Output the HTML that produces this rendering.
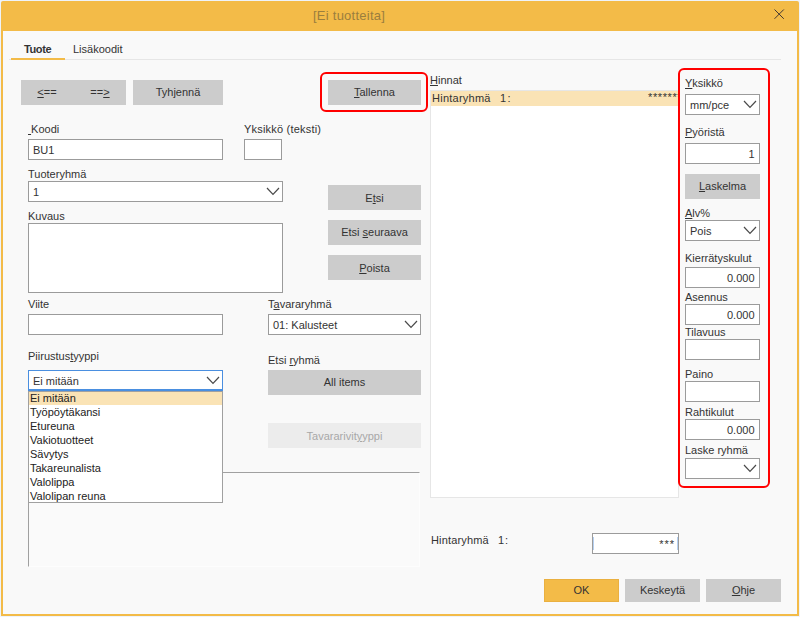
<!DOCTYPE html><html><head><meta charset="utf-8"><style>
html,body{margin:0;padding:0;}
body{width:800px;height:617px;position:relative;overflow:hidden;background:#eef3fa;font-family:'Liberation Sans',sans-serif;}
.t{position:absolute;white-space:pre;line-height:13px;font-family:'Liberation Sans',sans-serif;}
.r{position:absolute;}
u{text-decoration:underline;text-underline-offset:1px;}
</style></head><body>
<div class="r" style="left:1px;top:1px;width:798px;height:615px;background:#f3bb48;border-radius:2px 2px 0 0;"></div>
<div class="r" style="left:3px;top:31px;width:794px;height:583px;background:#f9f9f9;"></div>
<div class="t" style="left:313px;top:9px;font-size:13px;color:#9a7e3e;font-weight:normal;letter-spacing:0.25px;">[Ei tuotteita]</div>
<svg class="r" style="left:773px;top:8px" width="13" height="13"><path d="M1.5 1.5 L10.8 10.8 M10.8 1.5 L1.5 10.8" stroke="#3a3030" stroke-width="0.95" fill="none"/></svg>
<div class="r" style="left:9px;top:59px;width:772px;height:1px;background:#e6e6e6;"></div>
<div class="r" style="left:11px;top:58px;width:54px;height:2px;background:#f3bb48;"></div>
<div class="t" style="left:24px;top:43px;font-size:11px;color:#333333;font-weight:bold;letter-spacing:-0.4px;">Tuote</div>
<div class="t" style="left:73px;top:43px;font-size:11px;color:#333333;font-weight:normal;">Lisäkoodit</div>
<div class="r" style="left:21px;top:80px;width:105px;height:25px;background:#cccccc;"></div>
<div class="t" style="left:-53px;width:200px;text-align:center;top:86px;font-size:11px;color:#333333"><u>&lt;</u>==</div>
<div class="t" style="left:0px;width:200px;text-align:center;top:86px;font-size:11px;color:#333333">==<u>&gt;</u></div>
<div class="r" style="left:133px;top:80px;width:90px;height:25px;background:#cccccc;box-sizing:border-box;"></div>
<div class="t" style="left:78.0px;width:200px;text-align:center;top:86px;font-size:11px;color:#333333">Tyhjennä</div>
<div class="r" style="left:328px;top:80px;width:93px;height:25px;background:#cccccc;box-sizing:border-box;"></div>
<div class="t" style="left:274.5px;width:200px;text-align:center;top:86px;font-size:11px;color:#333333"><u>T</u>allenna</div>
<div class="t" style="left:28px;top:123px;font-size:11px;color:#333333;font-weight:normal;"><u> </u>Koodi</div>
<div class="r" style="left:28px;top:139px;width:195px;height:21px;background:#ffffff;border:1px solid #9b9b9b;box-sizing:border-box;"></div>
<div class="t" style="left:33px;top:144px;font-size:11px;color:#333333;font-weight:normal;">BU1</div>
<div class="t" style="left:244px;top:123px;font-size:11px;color:#333333;font-weight:normal;letter-spacing:0.2px;">Yksikkö (teksti)</div>
<div class="r" style="left:244px;top:139px;width:38px;height:21px;background:#ffffff;border:1px solid #9b9b9b;box-sizing:border-box;"></div>
<div class="t" style="left:28px;top:168px;font-size:11px;color:#333333;font-weight:normal;">Tuoteryhmä</div>
<div class="r" style="left:28px;top:181px;width:255px;height:21px;background:#ffffff;border:1px solid #9b9b9b;box-sizing:border-box;"></div>
<div class="t" style="left:33px;top:186px;font-size:11px;color:#333333;font-weight:normal;">1</div>
<svg class="r" style="left:266px;top:187px" width="14" height="9"><polyline points="1,1 7.0,7.4 13,1" fill="none" stroke="#4a4a4a" stroke-width="1.2"/></svg>
<div class="t" style="left:28px;top:210px;font-size:11px;color:#333333;font-weight:normal;">Kuvaus</div>
<div class="r" style="left:28px;top:223px;width:255px;height:70px;background:#ffffff;border:1px solid #9b9b9b;box-sizing:border-box;"></div>
<div class="r" style="left:328px;top:185px;width:93px;height:25px;background:#cccccc;box-sizing:border-box;"></div>
<div class="t" style="left:274.5px;width:200px;text-align:center;top:192px;font-size:11px;color:#333333">E<u>t</u>si</div>
<div class="r" style="left:328px;top:220px;width:93px;height:25px;background:#cccccc;box-sizing:border-box;"></div>
<div class="t" style="left:274.5px;width:200px;text-align:center;top:226px;font-size:11px;color:#333333">Etsi <u>s</u>euraava</div>
<div class="r" style="left:328px;top:255px;width:93px;height:25px;background:#cccccc;box-sizing:border-box;"></div>
<div class="t" style="left:274.5px;width:200px;text-align:center;top:262px;font-size:11px;color:#333333"><u>P</u>oista</div>
<div class="t" style="left:28px;top:298px;font-size:11px;color:#333333;font-weight:normal;">Viite</div>
<div class="r" style="left:28px;top:314px;width:195px;height:21px;background:#ffffff;border:1px solid #9b9b9b;box-sizing:border-box;"></div>
<div class="t" style="left:268px;top:298px;font-size:11px;color:#333333;font-weight:normal;">T<u>a</u>vararyhmä</div>
<div class="r" style="left:268px;top:314px;width:153px;height:21px;background:#ffffff;border:1px solid #9b9b9b;box-sizing:border-box;"></div>
<div class="t" style="left:273px;top:319px;font-size:11px;color:#333333;font-weight:normal;">01: Kalusteet</div>
<svg class="r" style="left:404px;top:320px" width="14" height="9"><polyline points="1,1 7.0,7.4 13,1" fill="none" stroke="#4a4a4a" stroke-width="1.2"/></svg>
<div class="t" style="left:28px;top:350px;font-size:11px;color:#333333;font-weight:normal;">Piirustus<u>t</u>yyppi</div>
<div class="t" style="left:268px;top:354px;font-size:11px;color:#333333;font-weight:normal;">Etsi <u>r</u>yhmä</div>
<div class="r" style="left:268px;top:370px;width:153px;height:25px;background:#cccccc;box-sizing:border-box;"></div>
<div class="t" style="left:244.5px;width:200px;text-align:center;top:376px;font-size:11px;color:#333333">All items</div>
<div class="r" style="left:268px;top:423px;width:153px;height:25px;background:#ececec;"></div>
<div class="t" style="left:244.5px;width:200px;text-align:center;top:430px;font-size:11px;color:#a8a8a8">Tavararivit<u>y</u>yppi</div>
<div class="r" style="left:28px;top:472px;width:390px;height:93px;background:#fafafa;border-left:1px solid #a0a0a0;border-top:1px solid #a0a0a0;border-right:1px solid #fdfdfd;border-bottom:1px solid #fdfdfd;"></div>
<div class="r" style="left:28px;top:370px;width:195px;height:21px;background:#ffffff;border:1px solid #4a8fe0;box-sizing:border-box;"></div>
<div class="t" style="left:33px;top:375px;font-size:11px;color:#333333;font-weight:normal;">Ei mitään</div>
<svg class="r" style="left:206px;top:376px" width="14" height="9"><polyline points="1,1 7.0,7.4 13,1" fill="none" stroke="#4a4a4a" stroke-width="1.2"/></svg>
<div class="r" style="left:28px;top:389px;width:195px;height:1px;background:#4a8fe0;"></div>
<div class="r" style="left:28px;top:391px;width:195px;height:112px;background:#ffffff;border:1px solid #a0a0a0;box-sizing:border-box;"></div>
<div class="r" style="left:29px;top:392px;width:193px;height:13px;background:#fae3b5;"></div>
<div class="t" style="left:30px;top:392px;font-size:11px;color:#222;font-weight:normal;">Ei mitään</div>
<div class="t" style="left:30px;top:406px;font-size:11px;color:#222;font-weight:normal;">Työpöytäkansi</div>
<div class="t" style="left:30px;top:420px;font-size:11px;color:#222;font-weight:normal;">Etureuna</div>
<div class="t" style="left:30px;top:434px;font-size:11px;color:#222;font-weight:normal;">Vakiotuotteet</div>
<div class="t" style="left:30px;top:448px;font-size:11px;color:#222;font-weight:normal;">Sävytys</div>
<div class="t" style="left:30px;top:462px;font-size:11px;color:#222;font-weight:normal;">Takareunalista</div>
<div class="t" style="left:30px;top:476px;font-size:11px;color:#222;font-weight:normal;">Valolippa</div>
<div class="t" style="left:30px;top:490px;font-size:11px;color:#222;font-weight:normal;">Valolipan reuna</div>
<div class="t" style="left:430px;top:74px;font-size:11px;color:#333333;font-weight:normal;"><u>H</u>innat</div>
<div class="r" style="left:430px;top:90px;width:249px;height:408px;background:#ffffff;border:1px solid #e6e6e6;box-sizing:border-box;"></div>
<div class="r" style="left:431px;top:91px;width:247px;height:15px;background:#fae3b5;"></div>
<div class="t" style="left:432px;top:92px;font-size:11px;color:#333333;font-weight:normal;letter-spacing:0.25px;">Hintaryhmä</div>
<div class="t" style="left:500px;top:92px;font-size:11px;color:#333333;font-weight:normal;letter-spacing:1.3px;">1:</div>
<div class="r" style="left:640px;top:91px;width:38px;height:15px;overflow:hidden"><div class="t" style="left:8px;top:0px;font-size:11px;color:#333;letter-spacing:0.6px">*********</div></div>
<div class="t" style="left:685px;top:77px;font-size:11px;color:#333333;font-weight:normal;"><u>Y</u>ksikkö</div>
<div class="r" style="left:685px;top:94px;width:75px;height:21px;background:#ffffff;border:1px solid #9b9b9b;box-sizing:border-box;"></div>
<div class="t" style="left:690px;top:99px;font-size:11px;color:#333333;font-weight:normal;">mm/pce</div>
<svg class="r" style="left:743px;top:100px" width="14" height="9"><polyline points="1,1 7.0,7.4 13,1" fill="none" stroke="#4a4a4a" stroke-width="1.2"/></svg>
<div class="t" style="left:685px;top:126px;font-size:11px;color:#333333;font-weight:normal;"><u>P</u>yöristä</div>
<div class="r" style="left:685px;top:143px;width:75px;height:21px;background:#ffffff;border:1px solid #9b9b9b;box-sizing:border-box;"></div>
<div class="t" style="left:554.5px;width:200px;text-align:right;top:148px;font-size:11px;color:#333333;">1</div>
<div class="r" style="left:685px;top:174px;width:75px;height:25px;background:#cccccc;box-sizing:border-box;"></div>
<div class="t" style="left:622.5px;width:200px;text-align:center;top:180px;font-size:11px;color:#333333"><u>L</u>askelma</div>
<div class="t" style="left:685px;top:207px;font-size:11px;color:#333333;font-weight:normal;"><u>A</u>lv%</div>
<div class="r" style="left:685px;top:220px;width:75px;height:21px;background:#ffffff;border:1px solid #9b9b9b;box-sizing:border-box;"></div>
<div class="t" style="left:690px;top:225px;font-size:11px;color:#333333;font-weight:normal;">Pois</div>
<svg class="r" style="left:743px;top:226px" width="14" height="9"><polyline points="1,1 7.0,7.4 13,1" fill="none" stroke="#4a4a4a" stroke-width="1.2"/></svg>
<div class="t" style="left:685px;top:252px;font-size:11px;color:#333333;font-weight:normal;">Kierrätyskulut</div>
<div class="r" style="left:685px;top:267px;width:75px;height:21px;background:#ffffff;border:1px solid #9b9b9b;box-sizing:border-box;"></div>
<div class="t" style="left:554.5px;width:200px;text-align:right;top:272px;font-size:11px;color:#333333;">0.000</div>
<div class="t" style="left:685px;top:291px;font-size:11px;color:#333333;font-weight:normal;">Asennus</div>
<div class="r" style="left:685px;top:304px;width:75px;height:21px;background:#ffffff;border:1px solid #9b9b9b;box-sizing:border-box;"></div>
<div class="t" style="left:554.5px;width:200px;text-align:right;top:309px;font-size:11px;color:#333333;">0.000</div>
<div class="t" style="left:685px;top:326px;font-size:11px;color:#333333;font-weight:normal;">Tilavuus</div>
<div class="r" style="left:685px;top:339px;width:75px;height:21px;background:#ffffff;border:1px solid #9b9b9b;box-sizing:border-box;"></div>
<div class="t" style="left:685px;top:368px;font-size:11px;color:#333333;font-weight:normal;">Paino</div>
<div class="r" style="left:685px;top:381px;width:75px;height:21px;background:#ffffff;border:1px solid #9b9b9b;box-sizing:border-box;"></div>
<div class="t" style="left:685px;top:406px;font-size:11px;color:#333333;font-weight:normal;">Rahtikulut</div>
<div class="r" style="left:685px;top:419px;width:75px;height:21px;background:#ffffff;border:1px solid #9b9b9b;box-sizing:border-box;"></div>
<div class="t" style="left:554.5px;width:200px;text-align:right;top:424px;font-size:11px;color:#333333;">0.000</div>
<div class="t" style="left:685px;top:444px;font-size:11px;color:#333333;font-weight:normal;">Laske ryhmä</div>
<div class="r" style="left:685px;top:458px;width:75px;height:21px;background:#ffffff;border:1px solid #9b9b9b;box-sizing:border-box;"></div>
<svg class="r" style="left:743px;top:464px" width="14" height="9"><polyline points="1,1 7.0,7.4 13,1" fill="none" stroke="#4a4a4a" stroke-width="1.2"/></svg>
<div class="r" style="left:320px;top:72px;width:108px;height:40px;background:transparent;box-sizing:border-box;border:2px solid #ff0000;border-radius:6px;"></div>
<div class="r" style="left:678px;top:68px;width:92px;height:420px;background:transparent;box-sizing:border-box;border:2px solid #ff0000;border-radius:6px;"></div>
<div class="t" style="left:431px;top:534px;font-size:11px;color:#333333;font-weight:normal;letter-spacing:0.15px;">Hintaryhmä</div>
<div class="t" style="left:498px;top:534px;font-size:11px;color:#333333;font-weight:normal;letter-spacing:1px;">1:</div>
<div class="r" style="left:592px;top:533px;width:87px;height:21px;background:#ffffff;border:1px solid #9b9b9b;box-sizing:border-box;"></div>
<div class="t" style="left:475px;width:200px;text-align:right;top:538px;font-size:11px;color:#333333;letter-spacing:1px;">***</div>
<div class="r" style="left:593px;top:537px;width:1px;height:13px;background:#b5d0f2;"></div>
<div class="r" style="left:677px;top:537px;width:1px;height:13px;background:#b5d0f2;"></div>
<div class="r" style="left:544px;top:579px;width:75px;height:23px;background:#f3bb48;border:1px solid #eab040;box-sizing:border-box;"></div>
<div class="t" style="left:481.5px;width:200px;text-align:center;top:584px;font-size:11px;color:#333333">OK</div>
<div class="r" style="left:625px;top:579px;width:75px;height:23px;background:#cccccc;box-sizing:border-box;"></div>
<div class="t" style="left:562.5px;width:200px;text-align:center;top:584px;font-size:11px;color:#333333">Keskeytä</div>
<div class="r" style="left:706px;top:579px;width:75px;height:23px;background:#cccccc;box-sizing:border-box;"></div>
<div class="t" style="left:643.5px;width:200px;text-align:center;top:584px;font-size:11px;color:#333333"><u>O</u>hje</div>
</body></html>
